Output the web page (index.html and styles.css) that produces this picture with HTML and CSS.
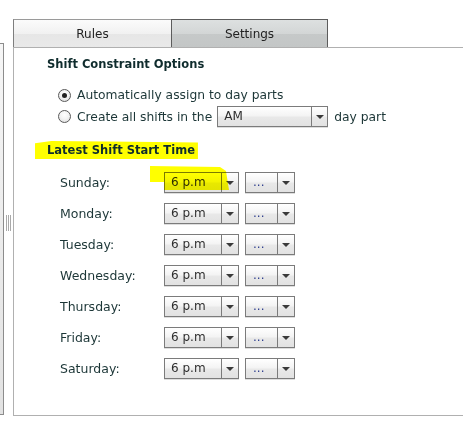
FILE: index.html
```html
<!DOCTYPE html>
<html>
<head>
<meta charset="utf-8">
<link rel="stylesheet" href="styles.css">
</head>
<body>
<div class="app">
  <div class="sidebar"></div>
  <div class="splitter"><div class="grip"></div></div>
  <div class="main">
    <div class="tabs">
      <div class="tab tab-rules">Rules</div>
      <div class="tab tab-settings">Settings</div>
    </div>
    <div class="panel">
      <h2 class="section-title">Shift Constraint Options</h2>
      <div class="options">
        <div class="opt"><span class="radio checked"></span><span class="opt-text">Automatically assign to day parts</span></div>
        <div class="opt"><span class="radio"></span><span class="opt-text">Create all shifts in the</span><span class="combo combo-am"><span class="combo-value">AM</span><span class="combo-arrow"></span></span><span class="opt-text after">day part</span></div>
      </div>
      <h2 class="section-title title-hl"><span class="hl">Latest Shift Start Time</span></h2>
      <div class="days">
        <div class="day-row"><span class="day-label">Sunday:</span><span class="combo combo-time"><span class="combo-value">6 p.m</span><span class="combo-arrow"></span></span><span class="combo combo-extra"><span class="combo-value dots">...</span><span class="combo-arrow"></span></span><span class="marker"></span></div>
        <div class="day-row"><span class="day-label">Monday:</span><span class="combo combo-time"><span class="combo-value">6 p.m</span><span class="combo-arrow"></span></span><span class="combo combo-extra"><span class="combo-value dots">...</span><span class="combo-arrow"></span></span></div>
        <div class="day-row"><span class="day-label">Tuesday:</span><span class="combo combo-time"><span class="combo-value">6 p.m</span><span class="combo-arrow"></span></span><span class="combo combo-extra"><span class="combo-value dots">...</span><span class="combo-arrow"></span></span></div>
        <div class="day-row"><span class="day-label">Wednesday:</span><span class="combo combo-time"><span class="combo-value">6 p.m</span><span class="combo-arrow"></span></span><span class="combo combo-extra"><span class="combo-value dots">...</span><span class="combo-arrow"></span></span></div>
        <div class="day-row"><span class="day-label">Thursday:</span><span class="combo combo-time"><span class="combo-value">6 p.m</span><span class="combo-arrow"></span></span><span class="combo combo-extra"><span class="combo-value dots">...</span><span class="combo-arrow"></span></span></div>
        <div class="day-row"><span class="day-label">Friday:</span><span class="combo combo-time"><span class="combo-value">6 p.m</span><span class="combo-arrow"></span></span><span class="combo combo-extra"><span class="combo-value dots">...</span><span class="combo-arrow"></span></span></div>
        <div class="day-row"><span class="day-label">Saturday:</span><span class="combo combo-time"><span class="combo-value">6 p.m</span><span class="combo-arrow"></span></span><span class="combo combo-extra"><span class="combo-value dots">...</span><span class="combo-arrow"></span></span></div>
      </div>
    </div>
  </div>
</div>
</body>
</html>
```

FILE: styles.css
```css
html, body {
  margin: 0;
  background: #ffffff;
}
body {
  font-family: "DejaVu Sans", Verdana, sans-serif;
  font-size: 12.3px;
  color: #1c3637;
}
.app {
  display: flex;
  width: 463px;
  height: 424px;
  overflow: hidden;
}
.sidebar {
  flex: none;
  width: 3px;
  height: 370px;
  margin-top: 43px;
  background: linear-gradient(#f6f6f6, #e2e2e2);
  border: 1px solid #8c8c8c;
  border-left: none;
}
.splitter {
  flex: none;
  width: 9px;
  box-sizing: border-box;
  padding-top: 215px;
  display: flex;
  justify-content: center;
  align-items: flex-start;
}
.grip {
  width: 5px;
  height: 16px;
  background: repeating-linear-gradient(90deg, #a9a9a9 0 1px, transparent 1px 2px);
}
.main {
  flex: none;
  width: 450px;
  padding-top: 19px;
  display: flex;
  flex-direction: column;
}
.tabs {
  display: flex;
  height: 28px;
}
.tab {
  box-sizing: border-box;
  height: 28px;
  display: flex;
  align-items: center;
  justify-content: center;
  border: 1px solid #7e7e7e;
  border-bottom: none;
  font-size: 12px;
  color: #222222;
}
.tab-rules {
  width: 158px;
  border-right: none;
  border-top-color: #9a9a9a;
  background: linear-gradient(#fbfbfb 0, #f1f1f1 50%, #e6e6e6 51%, #e9e9e9 100%);
}
.tab-settings {
  width: 157px;
  border-color: #5c5c5c;
  background: linear-gradient(#dde0e0 0, #d3d6d6 50%, #c6c9c9 51%, #c3c6c6 100%);
}
.panel {
  box-sizing: border-box;
  height: 369px;
  border: 1px solid #b0b0b0;
  border-right: none;
  padding: 6px 0 0 33px;
}
.section-title {
  margin: 0;
  font-size: 11.5px;
  font-weight: bold;
  line-height: 20px;
  color: #0f2c2d;
}
.options {
  margin-top: 10px;
  padding-left: 11px;
}
.opt {
  display: flex;
  align-items: center;
  height: 21px;
}
.opt:first-child {
  height: 22px;
}
.radio {
  flex: none;
  box-sizing: border-box;
  width: 13px;
  height: 13px;
  border-radius: 50%;
  border: 1px solid #5a5a5a;
  background: radial-gradient(circle at 50% 35%, #ffffff 0, #f2f2f2 50%, #d8d8d8 100%);
  margin-right: 6px;
  display: flex;
  align-items: center;
  justify-content: center;
}
.radio.checked::after {
  content: "";
  width: 5px;
  height: 5px;
  border-radius: 50%;
  background: #222222;
}
.opt-text.after {
  margin-left: 6px;
}
.combo {
  flex: none;
  box-sizing: border-box;
  display: inline-flex;
  height: 21px;
  border: 1px solid #7b7b7b;
  background: linear-gradient(#ffffff 0, #f4f4f4 45%, #e8e8e8 55%, #e2e2e2 100%);
  box-shadow: 0 1px 0 #dedede;
}
.combo-am {
  width: 111px;
  margin-left: 5px;
}
.combo-value {
  flex: 1;
  padding-left: 6px;
  line-height: 19px;
  font-size: 12px;
  color: #2e2e2e;
  white-space: nowrap;
}
.combo-value.dots {
  padding-left: 7px;
  color: #2c3c8e;
}
.combo-arrow {
  flex: none;
  width: 16px;
  border-left: 1px solid #7b7b7b;
  display: flex;
  align-items: center;
  justify-content: center;
}
.combo-am .combo-arrow {
  width: 15px;
}
.combo-arrow::after {
  content: "";
  width: 0;
  height: 0;
  border-left: 4px solid transparent;
  border-right: 4px solid transparent;
  border-top: 4px solid #3a3a3a;
}
.title-hl {
  margin-top: 13px;
  height: 20px;
}
.hl {
  display: inline-block;
  line-height: 18px;
  background: #ffff00;
  padding: 0 3px 0 12px;
  margin-left: -12px;
  clip-path: polygon(0 12%, 10% 0, 60% 4%, 100% 8%, 100% 100%, 0 100%);
}
.days {
  margin-top: 12px;
  padding-left: 13px;
}
.day-row {
  position: relative;
  display: flex;
  align-items: center;
  height: 21px;
  margin-bottom: 10px;
}
.day-label {
  flex: none;
  width: 104px;
  font-size: 12.5px;
  color: #1c3637;
}
.combo-time {
  width: 75px;
}
.combo-extra {
  width: 50px;
  margin-left: 6px;
}
.marker {
  position: absolute;
  left: 90px;
  top: -6px;
  width: 80px;
  height: 25px;
  background: #ffff00;
  mix-blend-mode: multiply;
  clip-path: polygon(0 0, 70px 1px, 76px 5px, 79px 24px, 14px 24px, 14px 16px, 0 16px);
}
```
